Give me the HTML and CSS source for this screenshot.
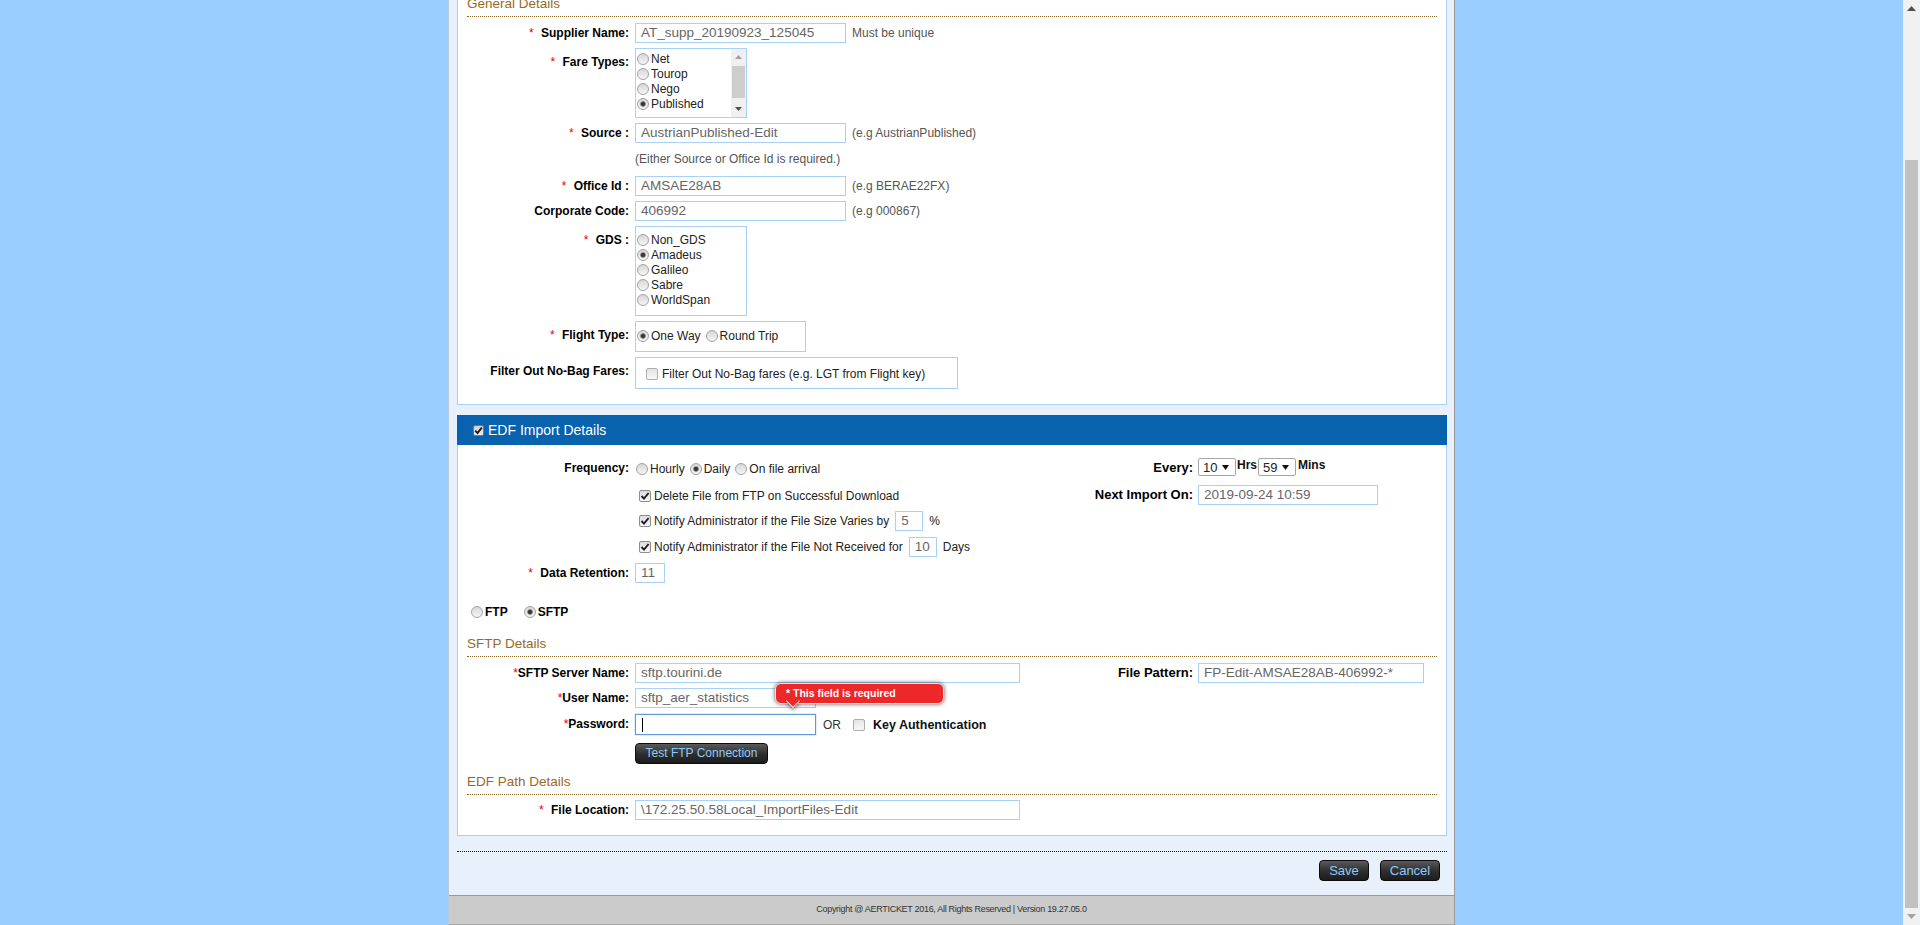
FILE: index.html
```html
<!DOCTYPE html>
<html lang="en">
<head>
<meta charset="utf-8">
<title>Supplier Edit</title>
<link rel="stylesheet" href="styles.css">
</head>
<body>
<div class="screen">
  <div class="stage">
    <div class="container">
      <div class="content">
        <section class="panel general">
          <h2 class="sec-title">General Details</h2>
          <div class="form">
            <div class="row">
              <div class="lbl"><span class="req">*</span> Supplier Name:</div>
              <div class="fld"><div class="inp w211">AT_supp_20190923_125045</div><span class="hint">Must be unique</span></div>
            </div>
            <div class="row">
              <div class="lbl lbl-box"><span class="req">*</span> Fare Types:</div>
              <div class="fld">
                <div class="listbox fare">
                  <div class="opts">
                    <div class="opt"><span class="radio"></span>Net</div>
                    <div class="opt"><span class="radio"></span>Tourop</div>
                    <div class="opt"><span class="radio"></span>Nego</div>
                    <div class="opt"><span class="radio on"></span>Published</div>
                  </div>
                  <div class="sb">
                    <div class="sb-btn"><svg width="7" height="4" viewBox="0 0 7 4"><path d="M0 4 L3.5 0 L7 4Z" fill="#a0a0a0"/></svg></div>
                    <div class="sb-thumb"></div>
                    <div class="sb-btn sb-down"><svg width="7" height="4" viewBox="0 0 7 4"><path d="M0 0 L7 0 L3.5 4Z" fill="#505050"/></svg></div>
                  </div>
                </div>
              </div>
            </div>
            <div class="row">
              <div class="lbl"><span class="req">*</span> Source :</div>
              <div class="fld"><div class="inp w211">AustrianPublished-Edit</div><span class="hint">(e.g AustrianPublished)</span></div>
            </div>
            <div class="row note-row">
              <div class="lbl"></div>
              <div class="note">(Either Source or Office Id is required.)</div>
            </div>
            <div class="row">
              <div class="lbl"><span class="req">*</span> Office Id :</div>
              <div class="fld"><div class="inp w211">AMSAE28AB</div><span class="hint">(e.g BERAE22FX)</span></div>
            </div>
            <div class="row">
              <div class="lbl">Corporate Code:</div>
              <div class="fld"><div class="inp w211">406992</div><span class="hint">(e.g 000867)</span></div>
            </div>
            <div class="row">
              <div class="lbl lbl-box"><span class="req">*</span> GDS :</div>
              <div class="fld">
                <div class="listbox gds">
                  <div class="opts">
                    <div class="opt"><span class="radio"></span>Non_GDS</div>
                    <div class="opt"><span class="radio on"></span>Amadeus</div>
                    <div class="opt"><span class="radio"></span>Galileo</div>
                    <div class="opt"><span class="radio"></span>Sabre</div>
                    <div class="opt"><span class="radio"></span>WorldSpan</div>
                  </div>
                </div>
              </div>
            </div>
            <div class="row">
              <div class="lbl lbl-box"><span class="req">*</span> Flight Type:</div>
              <div class="fld">
                <div class="flightbox">
                  <span class="radio on"></span><span class="opt-text">One Way</span>
                  <span class="radio"></span><span class="opt-text">Round Trip</span>
                </div>
              </div>
            </div>
            <div class="row">
              <div class="lbl lbl-box">Filter Out No-Bag Fares:</div>
              <div class="fld">
                <div class="filterbox"><span class="cb cb-off"></span><span class="filter-text">Filter Out No-Bag fares (e.g. LGT from Flight key)</span></div>
              </div>
            </div>
          </div>
        </section>

        <section class="edf">
          <div class="edf-head"><span class="cb cb-head"><svg width="9" height="9" viewBox="0 0 9 9"><path d="M1.2 4.6 L3.5 7 L7.8 1.6" fill="none" stroke="#1e1e1e" stroke-width="1.9"/></svg></span>EDF Import Details</div>
          <div class="panel edf-body">
            <div class="edf-top">
              <div class="left-col">
                <div class="row">
                  <div class="lbl">Frequency:</div>
                  <div class="radios">
                    <span class="radio"></span><span class="opt-text">Hourly</span>
                    <span class="radio on"></span><span class="opt-text">Daily</span>
                    <span class="radio"></span><span class="opt-text">On file arrival</span>
                  </div>
                </div>
                <div class="chk-row r-delete"><span class="cb"><svg width="10" height="10" viewBox="0 0 10 10"><path d="M1.5 5 L4 7.6 L8.6 2" fill="none" stroke="#1e1e1e" stroke-width="1.9"/></svg></span>Delete File from FTP on Successful Download</div>
                <div class="chk-row r-size"><span class="cb"><svg width="10" height="10" viewBox="0 0 10 10"><path d="M1.5 5 L4 7.6 L8.6 2" fill="none" stroke="#1e1e1e" stroke-width="1.9"/></svg></span>Notify Administrator if the File Size Varies by<div class="inp small">5</div><span class="unit">%</span></div>
                <div class="chk-row r-days"><span class="cb"><svg width="10" height="10" viewBox="0 0 10 10"><path d="M1.5 5 L4 7.6 L8.6 2" fill="none" stroke="#1e1e1e" stroke-width="1.9"/></svg></span>Notify Administrator if the File Not Received for<div class="inp small">10</div><span class="unit">Days</span></div>
                <div class="row r-retention">
                  <div class="lbl"><span class="req">*</span> Data Retention:</div>
                  <div class="fld"><div class="inp w30">11</div></div>
                </div>
              </div>
              <div class="right-col">
                <div class="row">
                  <div class="lbl rlbl">Every:</div>
                  <div class="every">
                    <div class="sel"><span>10</span><svg width="7" height="5" viewBox="0 0 7 5"><path d="M0 0 L7 0 L3.5 5Z" fill="#111"/></svg></div>
                    <span class="unit-b">Hrs</span>
                    <div class="sel"><span>59</span><svg width="7" height="5" viewBox="0 0 7 5"><path d="M0 0 L7 0 L3.5 5Z" fill="#111"/></svg></div>
                    <span class="unit-b mins">Mins</span>
                  </div>
                </div>
                <div class="row r-next">
                  <div class="lbl rlbl">Next Import On:</div>
                  <div class="fld"><div class="inp w180">2019-09-24 10:59</div></div>
                </div>
              </div>
            </div>

            <div class="ftp-row">
              <span class="radio"></span><span class="proto">FTP</span>
              <span class="radio on sftp-radio"></span><span class="proto">SFTP</span>
            </div>

            <h2 class="sec-title sftp-title">SFTP Details</h2>
            <div class="server-row">
              <div class="row grow">
                <div class="lbl"><span class="req tight">*</span>SFTP Server Name:</div>
                <div class="fld"><div class="inp w385">sftp.tourini.de</div></div>
              </div>
              <div class="row right-part">
                <div class="lbl rlbl">File Pattern:</div>
                <div class="fld"><div class="inp w226">FP-Edit-AMSAE28AB-406992-*</div></div>
              </div>
            </div>
            <div class="row r-user">
              <div class="lbl"><span class="req tight">*</span>User Name:</div>
              <div class="fld tip-anchor">
                <div class="inp w181">sftp_aer_statistics</div>
                <div class="tip">* This field is required<span class="tip-arrow"></span></div>
              </div>
            </div>
            <div class="row r-pass">
              <div class="lbl"><span class="req tight">*</span>Password:</div>
              <div class="fld pass-fld">
                <div class="inp w181 focus"><span class="caret"></span></div>
                <span class="or">OR</span>
                <span class="cb cb-off"></span>
                <span class="key">Key Authentication</span>
              </div>
            </div>
            <div class="btn-row"><button class="btn test">Test FTP Connection</button></div>

            <h2 class="sec-title path-title">EDF Path Details</h2>
            <div class="row r-file">
              <div class="lbl"><span class="req">*</span> File Location:</div>
              <div class="fld"><div class="inp w385">\172.25.50.58Local_ImportFiles-Edit</div></div>
            </div>
          </div>
        </section>

        <div class="dots"></div>
        <div class="actions">
          <button class="btn save">Save</button>
          <button class="btn cancel">Cancel</button>
        </div>
      </div>
      <footer class="footer">Copyright @ AERTICKET 2016, All Rights Reserved | Version 19.27.05.0</footer>
    </div>
  </div>
  <div class="vscroll">
    <div class="vs-btn"><svg width="9" height="5" viewBox="0 0 9 5"><path d="M0 5 L4.5 0 L9 5Z" fill="#505050"/></svg></div>
    <div class="vs-thumb"></div>
    <div class="vs-btn vs-down"><svg width="9" height="5" viewBox="0 0 9 5"><path d="M0 0 L9 0 L4.5 5Z" fill="#a3a3a3"/></svg></div>
  </div>
</div>
</body>
</html>
```

FILE: styles.css
```css
html, body {
  margin: 0;
  padding: 0;
}
body {
  font-family: "Liberation Sans", Arial, sans-serif;
  font-size: 12px;
  color: #000;
}
.screen {
  display: flex;
  height: 925px;
  overflow: hidden;
  background: #99ccff;
}
.stage {
  flex: 1;
  display: flex;
  justify-content: center;
}
.container {
  width: 1007px;
  box-sizing: border-box;
  height: 925px;
  background: #e8f1fb;
  border-left: 1px solid #b7cbe0;
  border-right: 1px solid #9a9a9a;
  display: flex;
  flex-direction: column;
}
.content {
  padding: 0 7px 0 8px;
}
.panel {
  background: #fff;
  border: 1px solid #a9d0f5;
  padding: 0 9px;
}
.general {
  margin-top: -14px;
  padding-top: 8px;
  padding-bottom: 15px;
}
.sec-title {
  margin: 0;
  font-size: 13.5px;
  font-weight: normal;
  line-height: 18px;
  color: #9a6a1c;
  padding-bottom: 3px;
  border-bottom: 1px dotted #85621e;
}
.form {
  display: flex;
  flex-direction: column;
  gap: 5px;
  margin-top: 6px;
}
.row {
  display: flex;
  align-items: flex-start;
}
.lbl {
  width: 162px;
  flex: none;
  margin-right: 6px;
  text-align: right;
  font-weight: bold;
  font-size: 12px;
  line-height: 20px;
  white-space: nowrap;
  color: #000;
}
.lbl-box {
  padding-top: 4px;
}
.req {
  color: #e60000;
  font-weight: normal;
  margin-right: 4px;
}
.req.tight {
  margin-right: 0;
}
.fld {
  display: flex;
  align-items: flex-start;
}
.inp {
  height: 20px;
  box-sizing: border-box;
  border: 1px solid #a9d0f5;
  background: #fff;
  font-size: 13.5px;
  line-height: 18px;
  color: #666;
  padding: 0 5px;
  white-space: nowrap;
  overflow: hidden;
}
.w211 { width: 211px; }
.w30 { width: 30px; }
.w180 { width: 180px; }
.w385 { width: 385px; }
.w226 { width: 226px; }
.w181 { width: 181px; }
.hint {
  margin-left: 6px;
  font-size: 12px;
  line-height: 20px;
  color: #555;
}
.note-row {
  height: 23px;
}
.note {
  font-size: 12px;
  line-height: 23px;
  color: #555;
}

/* list boxes */
.listbox {
  box-sizing: border-box;
  border: 1px solid #a9d0f5;
  width: 112px;
  display: flex;
  background: #fff;
}
.listbox.fare {
  height: 70px;
}
.listbox.gds {
  height: 90px;
}
.opts {
  flex: 1;
  padding: 2px 0 0 1px;
}
.listbox.gds .opts {
  padding-top: 5px;
}
.opt {
  display: flex;
  align-items: center;
  height: 15px;
  font-size: 12px;
  color: #222;
  white-space: nowrap;
}
.sb {
  width: 15px;
  background: #f0f0f0;
  display: flex;
  flex-direction: column;
  align-items: center;
}
.sb-btn {
  height: 16px;
  display: flex;
  align-items: center;
  justify-content: center;
}
.sb-thumb {
  width: 13px;
  height: 32px;
  margin-top: 1px;
  background: #cdcdcd;
}
.sb-down {
  margin-top: auto;
}

/* radios & checkboxes */
.radio {
  width: 12px;
  height: 12px;
  flex: none;
  box-sizing: border-box;
  border-radius: 50%;
  border: 1px solid #a3a3a3;
  background: linear-gradient(#d6d6d6, #f6f6f6);
  margin-right: 2px;
}
.radio.on {
  background: radial-gradient(circle, #3a3a3a 0, #3a3a3a 1.8px, rgba(80,80,80,0.5) 2.6px, transparent 3.2px), linear-gradient(#d6d6d6, #f6f6f6);
}
.cb {
  width: 12px;
  height: 12px;
  flex: none;
  box-sizing: border-box;
  border: 1px solid #8e8e8e;
  border-radius: 2px;
  background: linear-gradient(#dcdcdc, #f7f7f7);
  display: inline-flex;
  align-items: center;
  justify-content: center;
}
.cb-off {
  border-color: #adadad;
  background: linear-gradient(#e4e4e4, #f8f8f8);
}
.cb-head {
  width: 11px;
  height: 11px;
  margin-right: 4px;
  border-color: #7a7a7a;
  background: linear-gradient(#cfcfcf, #ececec);
}
.opt-text {
  font-size: 12px;
  color: #222;
  margin-right: 5px;
  white-space: nowrap;
}
.flightbox {
  width: 171px;
  height: 31px;
  box-sizing: border-box;
  border: 1px solid #a9d0f5;
  padding: 7px 1px 0;
  display: flex;
  align-items: flex-start;
}
.flightbox .radio {
  margin-top: 1px;
}
.filterbox {
  width: 323px;
  height: 32px;
  box-sizing: border-box;
  border: 1px solid #a9d0f5;
  padding: 2px 10px 0;
  display: flex;
  align-items: center;
}
.filter-text {
  margin-left: 4px;
  font-size: 12px;
  color: #222;
  white-space: nowrap;
}

/* EDF */
.edf {
  margin-top: 10px;
}
.edf-head {
  height: 30px;
  background: #0862ae;
  color: #fff;
  font-size: 14px;
  display: flex;
  align-items: center;
  padding-left: 16px;
}
.edf-body {
  border-top: none;
  padding-top: 13px;
  padding-bottom: 15px;
}
.edf-top {
  display: flex;
}
.left-col {
  flex: 1;
  display: flex;
  flex-direction: column;
}
.right-col {
  width: 386px;
  flex: none;
  display: flex;
  flex-direction: column;
}
.rlbl {
  width: 142px;
  margin-right: 5px;
  line-height: 20px;
  font-size: 13px;
}
.radios {
  display: flex;
  align-items: center;
  height: 20px;
  padding-left: 1px;
  padding-top: 1px;
  box-sizing: border-box;
}
.chk-row {
  display: flex;
  align-items: center;
  height: 20px;
  margin-left: 172px;
  font-size: 12px;
  color: #222;
  white-space: nowrap;
}
.chk-row .cb {
  margin-right: 3px;
}
.r-delete { margin-top: 8px; }
.r-size { margin-top: 5px; }
.r-days { margin-top: 6px; }
.r-retention { margin-top: 6px; }
.inp.small {
  width: 28px;
  margin-left: 6px;
}
.unit {
  margin-left: 6px;
}
.every {
  display: flex;
  align-items: flex-start;
}
.sel {
  width: 38px;
  height: 18px;
  box-sizing: border-box;
  border: 1px solid #a6a6a6;
  border-radius: 2px;
  background: #fff;
  display: flex;
  align-items: center;
  justify-content: space-between;
  padding: 0 6px 0 4px;
  font-size: 13px;
  color: #222;
}
.unit-b {
  font-weight: bold;
  font-size: 12px;
  line-height: 15px;
  margin: 0 1px 0 1px;
  color: #111;
}
.unit-b.mins {
  margin-left: 2px;
}
.r-next {
  margin-top: 7px;
}
.ftp-row {
  display: flex;
  align-items: center;
  height: 20px;
  margin-top: 19px;
  padding-left: 4px;
}
.proto {
  font-weight: bold;
  font-size: 12px;
}
.sftp-radio {
  margin-left: 16px;
}
.sftp-title {
  margin-top: 13px;
}
.server-row {
  display: flex;
  margin-top: 6px;
}
.grow {
  flex: 1;
}
.right-part {
  width: 386px;
  flex: none;
}
.r-user {
  margin-top: 5px;
}
.tip-anchor {
  position: relative;
}
.tip {
  position: absolute;
  left: 140px;
  top: -5px;
  z-index: 5;
  width: 169px;
  height: 21px;
  box-sizing: border-box;
  background: #ee2828;
  border: 1px solid #e2e2e2;
  border-radius: 6px;
  box-shadow: 0 0 4px rgba(0, 0, 0, 0.65);
  color: #fff;
  font-size: 10.5px;
  font-weight: bold;
  line-height: 19px;
  padding-left: 10px;
  white-space: nowrap;
}
.tip-arrow {
  position: absolute;
  left: 12px;
  top: 12px;
  width: 10px;
  height: 10px;
  box-sizing: border-box;
  background: #ee2828;
  border-right: 1px solid #e2e2e2;
  border-bottom: 1px solid #e2e2e2;
  transform: rotate(45deg);
  box-shadow: 2px 2px 3px rgba(0, 0, 0, 0.35);
}
.r-pass {
  margin-top: 6px;
}
.pass-fld {
  align-items: center;
}
.inp.focus {
  height: 21px;
  border-color: #5b9bd5;
  box-shadow: 0 0 1px #5b9bd5;
  display: flex;
  align-items: center;
}
.caret {
  width: 1px;
  height: 14px;
  background: #000;
  margin-left: 1px;
}
.or {
  margin-left: 7px;
  margin-right: 12px;
  font-size: 12px;
  color: #333;
}
.key {
  margin-left: 8px;
  font-weight: bold;
  font-size: 12.5px;
  color: #111;
}
.btn-row {
  margin-top: 8px;
  padding-left: 168px;
  display: flex;
}
.btn {
  height: 21px;
  box-sizing: border-box;
  border: 1px solid #0c0c0c;
  border-radius: 4px;
  background: linear-gradient(#5a5a5a, #303030 50%, #1c1c1c);
  color: #90c8fb;
  font-family: "Liberation Sans", Arial, sans-serif;
  font-size: 12px;
  padding: 0;
  line-height: 19px;
  cursor: pointer;
}
.btn.test {
  width: 133px;
}
.path-title {
  margin-top: 9px;
}
.r-file {
  margin-top: 5px;
}
.dots {
  margin-top: 15px;
  border-top: 1px dotted #111;
}
.actions {
  margin-top: 8px;
  display: flex;
  justify-content: flex-end;
  padding-right: 7px;
  gap: 11px;
}
.btn.save {
  width: 50px;
  font-size: 13px;
}
.btn.cancel {
  width: 60px;
  font-size: 13px;
}
.footer {
  margin-top: auto;
  height: 30px;
  box-sizing: border-box;
  background: #cbcbcb;
  border-top: 1px solid #999;
  border-bottom: 1px solid #a8a8a8;
  text-align: center;
  font-size: 9px;
  letter-spacing: -0.3px;
  line-height: 27px;
  color: #333;
}

/* window scrollbar */
.vscroll {
  width: 17px;
  flex: none;
  background: #f1f1f1;
  display: flex;
  flex-direction: column;
  align-items: center;
}
.vs-btn {
  height: 17px;
  display: flex;
  align-items: center;
  justify-content: center;
}
.vs-thumb {
  width: 13px;
  height: 748px;
  margin-top: 143px;
  background: #c1c1c1;
}
.vs-down {
  margin-top: auto;
}
```
